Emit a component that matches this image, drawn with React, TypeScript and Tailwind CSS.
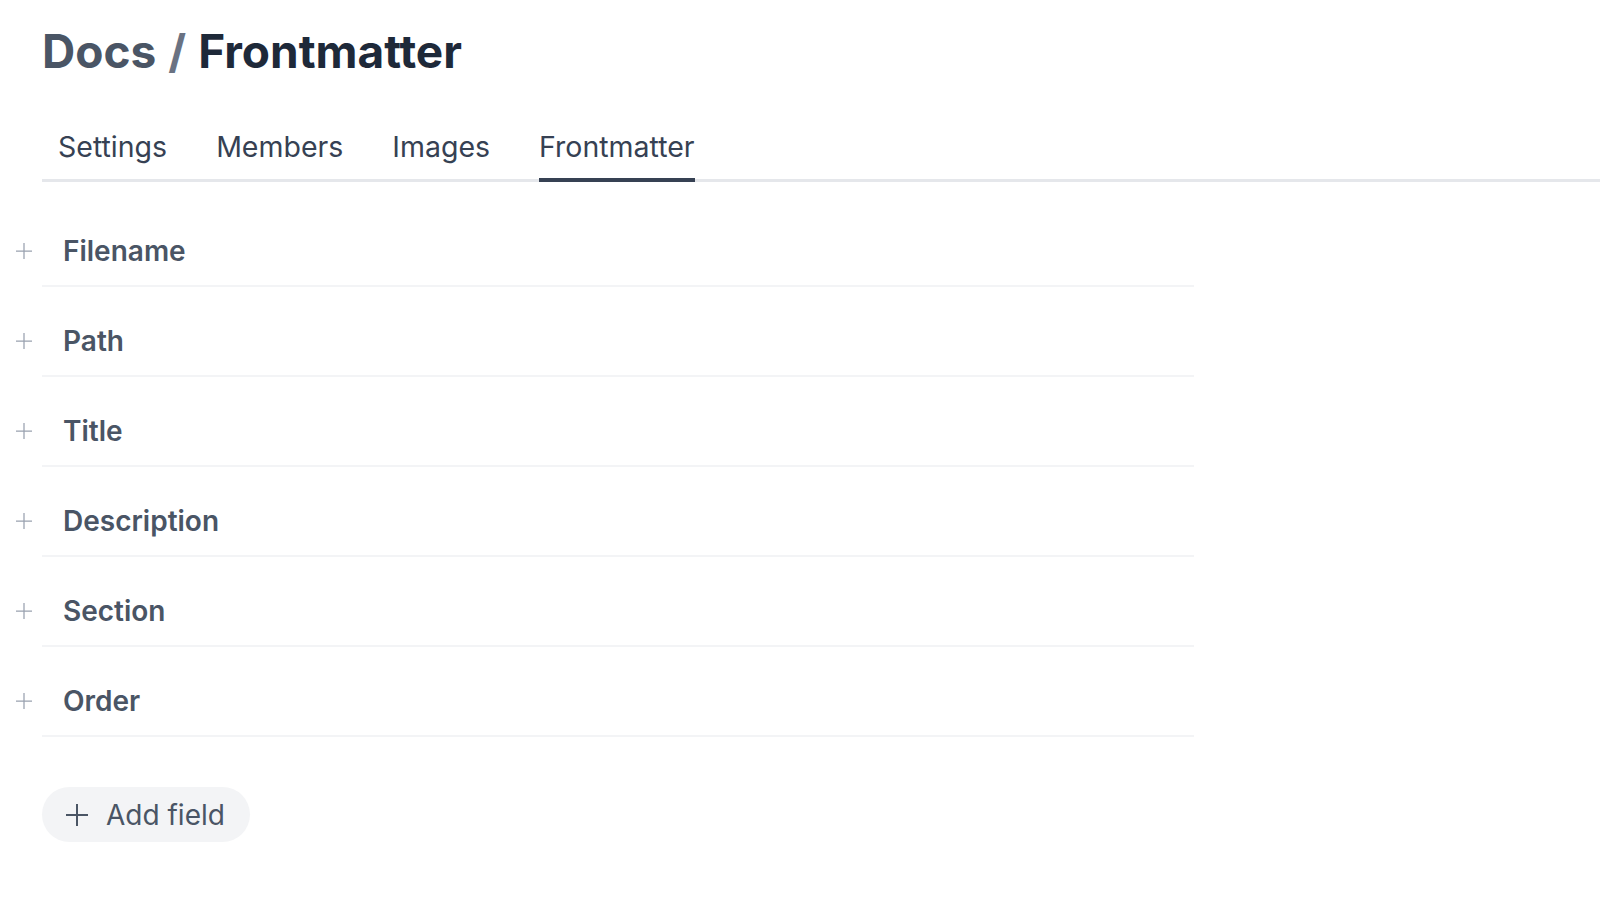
const tabs = ['Settings', 'Members', 'Images', 'Frontmatter'];
const fields = ['Filename', 'Path', 'Title', 'Description', 'Section', 'Order'];

function PlusMark({ size, stroke, className }: { size: number; stroke: number; className?: string }) {
  const h = size / 2;
  return (
    <svg width={size} height={size} viewBox={`0 0 ${size} ${size}`} className={className} fill="none">
      <path d={`M${h} 0V${size}M0 ${h}H${size}`} stroke="currentColor" strokeWidth={stroke} />
    </svg>
  );
}

export default function App() {
  const active = 'Frontmatter';

  return (
    <div className="min-h-screen bg-white font-['Inter','Noto_Sans',sans-serif] antialiased">
      <div className="pl-[42px] pt-[29px]">
        {/* Breadcrumb heading */}
        <h1 className="flex items-baseline text-[46px] font-bold leading-[45px]">
          <span className="text-gray-600">Docs</span>
          <span className="px-[12px] text-gray-500">/</span>
          <span className="text-gray-800">Frontmatter</span>
        </h1>

        {/* Tabs */}
        <nav className="mt-[55px] flex gap-[49px] border-b-[3px] border-gray-200 pl-4">
          {tabs.map((tab) => (
            <button
              key={tab}
              className={`-mb-[3px] border-b-4 pb-[13px] text-[28.5px] leading-9 text-gray-700 ${
                tab === active ? 'border-gray-700' : 'border-transparent'
              }`}
            >
              {tab}
            </button>
          ))}
        </nav>

        {/* Field list */}
        <div className="mt-[15px] w-[1152px]">
          {fields.map((field) => (
            <div key={field} className="flex items-center border-b-2 border-gray-100 pt-9 pb-4">
              <div className="-ml-[26px] flex w-[26px] items-center">
                <PlusMark size={16} stroke={1.25} className="text-gray-400" />
              </div>
              <span className="pl-[21px] text-[28px] font-semibold leading-9 text-gray-600">{field}</span>
            </div>
          ))}
        </div>

        <button className="mt-[50px] flex h-[55px] items-center gap-[18px] rounded-full bg-gray-100 pl-6 pr-[25px] text-[28px] leading-9 text-gray-600">
          <PlusMark size={22} stroke={2} />
          <span>Add field</span>
        </button>
      </div>
    </div>
  );
}
